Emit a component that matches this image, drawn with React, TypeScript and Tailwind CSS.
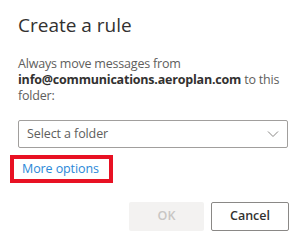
import React from "react";

export default function App() {
  return (
    <div
      className="w-[300px] h-[250px] bg-white relative overflow-hidden"
      style={{ fontFamily: '"Open Sans", "Noto Sans", sans-serif' }}
    >
      <div className="pl-[18px] pr-[12px]">
        <div className="pt-[13px] h-[37px] text-[19px] leading-[24px] text-[#323130]">
          Create a rule
        </div>
        <div className="mt-[19px] w-[270px] text-[12.5px] leading-[16px] text-[#605e5c] tracking-[-0.2px]">
          Always move messages from{" "}
          <span className="font-bold text-[#323130]">info@communications.aeroplan.com</span> to this
          folder:
        </div>
        <div className="mt-[16px] h-[28px] w-[270px] border border-[#a19f9d] rounded-[2px] flex items-center justify-between pl-[8px] pr-[8px]">
          <span className="text-[12.5px] text-[#605e5c] tracking-[-0.1px]">Select a folder</span>
          <svg width="12" height="8" viewBox="0 0 12 8" fill="none">
            <path d="M1 1.5 L6 6.5 L11 1.5" stroke="#8a8886" strokeWidth="1" />
          </svg>
        </div>
        <div className="mt-[7px] ml-[-8px] w-[103px] h-[28px] border-[4px] border-[#e81123] flex items-center pl-[8px]">
          <span className="text-[12.5px] text-[#2b88d8] tracking-[-0.1px]">More options</span>
        </div>
        <div className="mt-[19px] flex justify-end gap-[7px]">
          <div className="w-[75px] h-[29px] bg-[#f3f2f1] rounded-[2px] flex items-center justify-center text-[12.5px] font-semibold text-[#c8c6c4]">
            OK
          </div>
          <div className="w-[78px] h-[29px] mr-[-1px] border border-[#8a8886] rounded-[2px] flex items-center justify-center text-[12.5px] font-semibold text-[#323130]">
            Cancel
          </div>
        </div>
      </div>
    </div>
  );
}
